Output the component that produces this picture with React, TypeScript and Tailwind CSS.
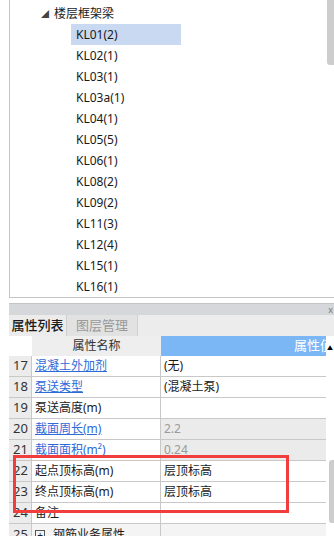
import React from 'react'

const items = [
  'KL01(2)', 'KL02(1)', 'KL03(1)', 'KL03a(1)', 'KL04(1)', 'KL05(5)', 'KL06(1)',
  'KL08(2)', 'KL09(2)', 'KL11(3)', 'KL12(4)', 'KL15(1)', 'KL16(1)',
]

interface Row {
  no: number
  name: string
  value: string
  link?: boolean
  readonly?: boolean
}

const rows: Row[] = [
  { no: 17, name: '混凝土外加剂', value: '(无)', link: true },
  { no: 18, name: '泵送类型', value: '(混凝土泵)', link: true },
  { no: 19, name: '泵送高度(m)', value: '' },
  { no: 20, name: '截面周长(m)', value: '2.2', link: true, readonly: true },
  { no: 21, name: '截面面积(m²)', value: '0.24', link: true, readonly: true },
  { no: 22, name: '起点顶标高(m)', value: '层顶标高' },
  { no: 23, name: '终点顶标高(m)', value: '层顶标高' },
  { no: 24, name: '备注', value: '' },
]

export default function App() {
  return (
    <div className="relative w-[334px] h-[536px] overflow-hidden bg-white text-[12px] text-[#1a1a1a] font-['Noto_Sans','Noto_Sans_CJK_SC',sans-serif]">
      {/* 构件树 */}
      <div className="ml-[9px] h-[298px] border-l border-b border-[#c4c4c4] pt-[3px]">
        <div className="flex items-center h-[21px] pl-[31px]">
          <span className="text-[8px] text-[#444] mr-[5px] leading-none">◢</span>
          <span>楼层框架梁</span>
        </div>
        {items.map((it, i) => (
          <div key={it} className="flex items-center h-[21px] pl-[61px]">
            <span className={`w-[110px] h-[21px] pl-[5px] flex items-center ${i === 0 ? 'bg-[#c9d9f1]' : ''}`}>{it}</span>
          </div>
        ))}
      </div>
      <div className="absolute top-0 right-0 w-[7px] h-[65px] bg-[#cdcdcd] rounded-bl-[3px]" />

      {/* 属性面板 */}
      <div className="ml-[9px] mt-[5px]">
        <div className="h-[12px] bg-[#d6d7db] border-t border-[#c3c4c8] flex justify-end items-center pr-[1px]">
          <span className="text-[9px] leading-none text-[#777]">x</span>
        </div>
        <div className="h-[21px] bg-[#ececec] flex text-[13px]">
          <div className="w-[58px] flex items-center justify-center border-r border-[#d0d0d0] font-medium">属性列表</div>
          <div className="w-[71px] flex items-center justify-center bg-[#e2e2e2] border-r border-[#d0d0d0] text-[#9a9a9a]">图层管理</div>
        </div>
        <div className="flex h-[20px] text-[12px]">
          <div className="w-[23px] bg-white" />
          <div className="w-[129px] bg-[#eeeeee] flex items-center justify-center text-[#333]">属性名称</div>
          <div className="w-[165px] bg-[#7cb7f5] flex items-center justify-end text-white text-[13px] overflow-hidden whitespace-nowrap">
            <span className="mr-[-7px]">属性值</span>
          </div>
          <div className="flex-1 flex justify-end items-end pb-[5px] pr-[1px]">
            <span className="text-[6px] leading-none text-black">▲</span>
          </div>
        </div>
        {rows.map((r) => (
          <div key={r.no} className="flex h-[21px]">
            <div className="w-[23px] bg-[#ececec] border-b border-r border-[#c8c8c8] flex items-center pl-[4px] text-[13px] text-[#333]">{r.no}</div>
            <div className={`w-[129px] border-b border-r border-[#c8c8c8] flex items-center pl-[3px] ${r.link ? 'text-[#2f6ad8] underline' : ''}`}>{r.name}</div>
            <div className={`w-[165px] border-b border-[#c8c8c8] flex items-center pl-[3px] ${r.readonly ? 'bg-[#ebebeb] text-[#9a9a9a]' : ''}`}>{r.value}</div>
          </div>
        ))}
        <div className="flex h-[21px]">
          <div className="w-[23px] bg-[#ececec] border-r border-[#c8c8c8] flex items-center pl-[4px] text-[13px] text-[#333]">25</div>
          <div className="w-[129px] border-r border-[#c8c8c8] flex items-center pl-[3px] bg-[#f4f4f4]">
            <span className="w-[10px] h-[10px] border border-[#555] flex items-center justify-center text-[10px] leading-none mr-[8px]">+</span>
            <span>钢筋业务属性</span>
          </div>
          <div className="w-[165px] bg-[#f4f4f4]" />
        </div>
      </div>
      <div className="absolute top-[460px] right-0 w-[5px] h-[63px] bg-[#cdcdcd] rounded-l-[3px]" />

      {/* 红框标注 */}
      <div className="absolute left-[13px] top-[455px] w-[276px] h-[58px] border-[3px] border-[#f23d3d]" />
    </div>
  )
}
